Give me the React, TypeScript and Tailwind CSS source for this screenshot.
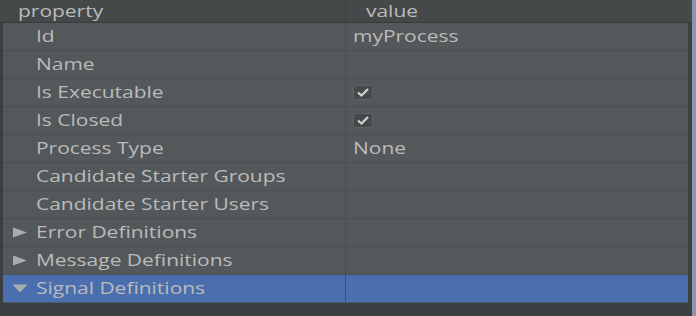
import React from "react";

type Row = { label: string; value?: string; check?: boolean; arrow?: "right" | "down"; selected?: boolean };

const rows: Row[] = [
  { label: "Id", value: "myProcess" },
  { label: "Name" },
  { label: "Is Executable", check: true },
  { label: "Is Closed", check: true },
  { label: "Process Type", value: "None" },
  { label: "Candidate Starter Groups" },
  { label: "Candidate Starter Users" },
  { label: "Error Definitions", arrow: "right" },
  { label: "Message Definitions", arrow: "right" },
  { label: "Signal Definitions", arrow: "down", selected: true },
];

function T({ children }: { children: React.ReactNode }) {
  return <span className="inline-block whitespace-nowrap origin-left scale-x-[1.31] -translate-y-[1px]">{children}</span>;
}

function H({ children }: { children: React.ReactNode }) {
  return <span className="inline-block whitespace-nowrap origin-left scale-x-[1.31]">{children}</span>;
}

function Check() {
  return (
    <div className="w-[20px] h-[15px] rounded-[2px] bg-[#45494a] border border-[#5e6264] flex items-center justify-center">
      <svg width="14" height="11" viewBox="0 0 14 11">
        <path d="M2 5.5 L5.5 8.5 L12 2" stroke="#d4d4d4" strokeWidth="2.2" fill="none" />
      </svg>
    </div>
  );
}

function Arrow({ dir }: { dir: "right" | "down" }) {
  return dir === "right" ? (
    <svg width="16" height="11" viewBox="0 0 16 11">
      <path d="M1 0.5 L15 5.5 L1 10.5 Z" fill="#a9adb0" />
    </svg>
  ) : (
    <svg width="16" height="9" viewBox="0 0 16 9">
      <path d="M0.5 0.5 L15.5 0.5 L8 8.5 Z" fill="#a9adb0" />
    </svg>
  );
}

export default function App() {
  return (
    <div
      className="w-[696px] h-[316px] bg-[#3c3f41] flex overflow-hidden text-[#bbbbbb] text-[16px]"
      style={{ fontFamily: '"Open Sans", "Noto Sans", sans-serif' }}
    >
      <div className="flex-1 flex flex-col pl-[3px]">
        <div className="h-[23px] flex items-center bg-[#45494a] border-b border-[#393c3d] -ml-[3px] pl-[3px] pr-[9px]">
          <div className="w-[343px] h-full flex items-center pl-[15px] border-r border-[#3d4042]">
            <H>property</H>
          </div>
          <div className="flex-1 h-full flex items-center pl-[20px]">
            <H>value</H>
          </div>
        </div>
        <div className="flex flex-col w-[685px]">
          {rows.map((r) => (
            <div
              key={r.label}
              className={`h-[28px] flex border-b ${r.selected ? "bg-[#4b6eaf] border-[#4a5b78]" : "bg-[#53585a] border-[#4a4e50]"}`}
            >
              <div className="w-[343px] flex items-center border-r border-[#4a4e50]">
                <div className="w-[33px] flex justify-center pl-[1px]">{r.arrow && <Arrow dir={r.arrow} />}</div>
                <T>{r.label}</T>
              </div>
              <div className="flex-1 flex items-center pl-[7px]">
                {r.check ? <Check /> : <T>{r.value}</T>}
              </div>
            </div>
          ))}
        </div>
      </div>
      <div className="w-[4px] bg-[#8d95a8]" />
    </div>
  );
}
